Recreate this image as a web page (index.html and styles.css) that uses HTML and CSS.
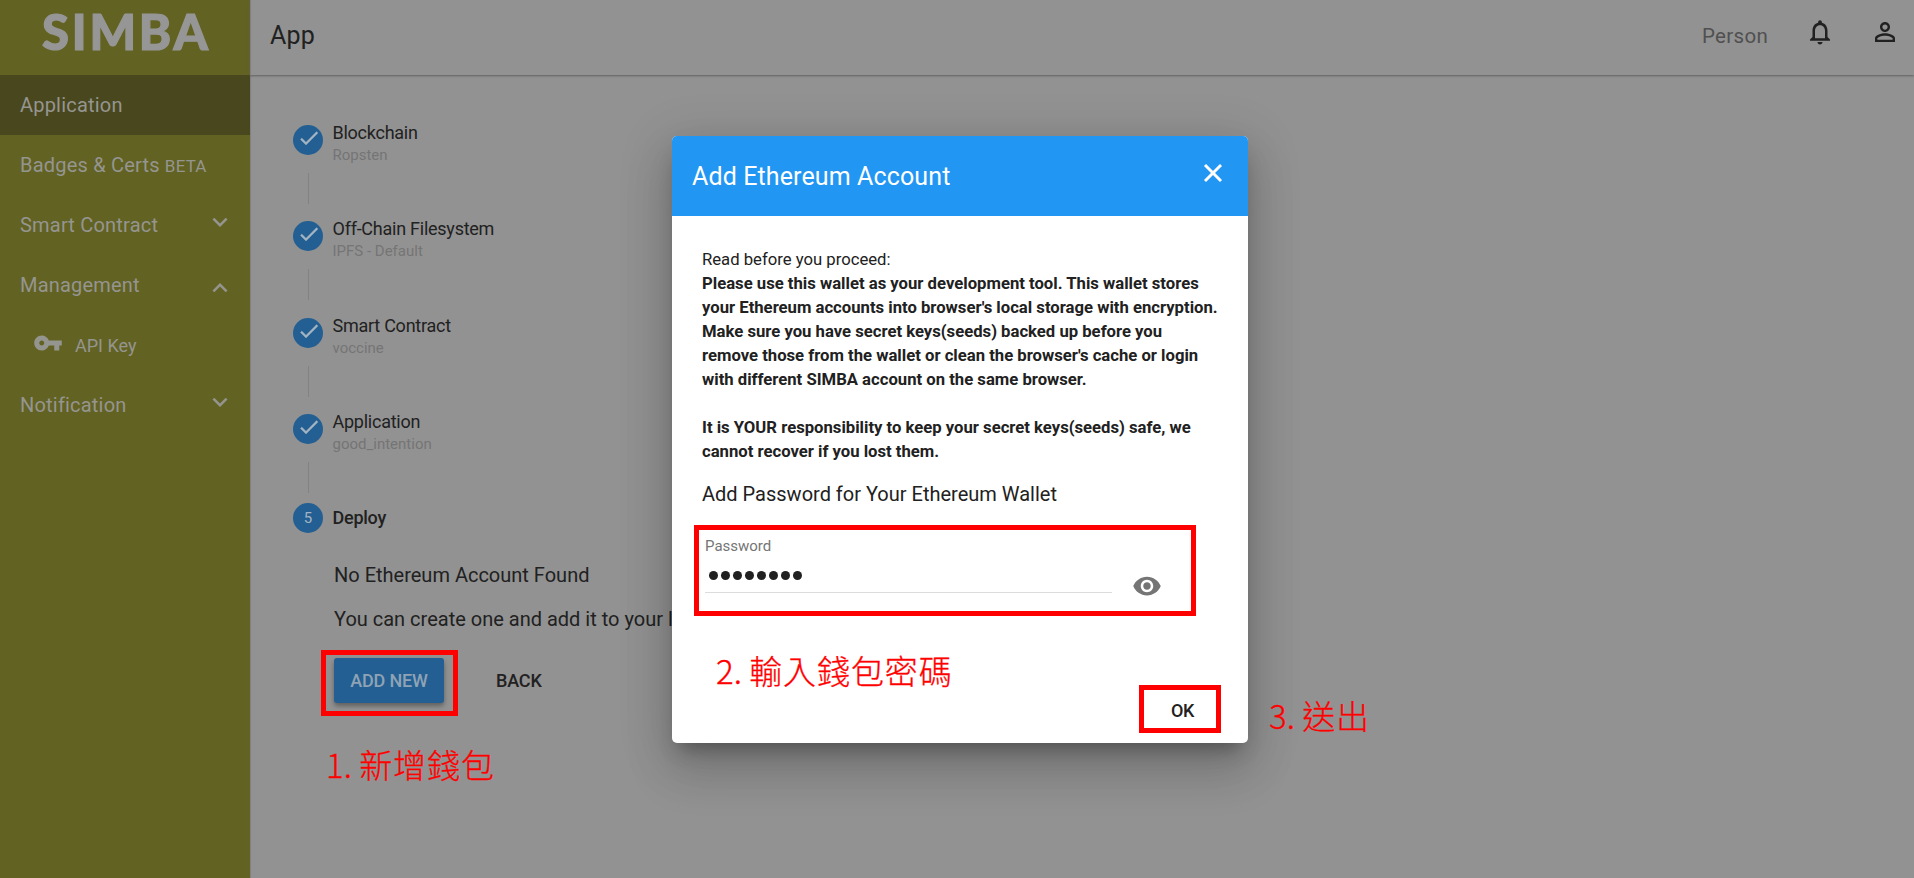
FILE: index.html
```html
<!DOCTYPE html>
<html lang="en">
<head>
<meta charset="utf-8">
<title>SIMBA</title>
<link rel="stylesheet" href="styles.css">
</head>
<body>
<div class="app">
  <aside class="sidebar">
    <div class="logo">SIMBA</div>
    <nav class="menu">
      <a class="item active"><span>Application</span></a>
      <a class="item"><span>Badges &amp; Certs <small class="beta">BETA</small></span></a>
      <a class="item"><span>Smart Contract</span><svg class="icon chevron" viewBox="0 0 24 24"><path d="M16.59 8.59L12 13.17 7.41 8.59 6 10l6 6 6-6z"/></svg></a>
      <a class="item"><span>Management</span><svg class="icon chevron up" viewBox="0 0 24 24"><path d="M12 8l-6 6 1.41 1.41L12 10.83l4.59 4.58L18 14z"/></svg></a>
      <a class="item sub"><svg class="icon" viewBox="0 0 24 24"><path d="M12.65 10C11.83 7.67 9.61 6 7 6c-3.31 0-6 2.69-6 6s2.690 6 6 6c2.610 0 4.830-1.670 5.650-4H17v4h4v-4h2v-4H12.650zM7 14c-1.100 0-2-.9-2-2s.9-2 2-2 2 .9 2 2-.9 2-2 2z"/></svg><span>API Key</span></a>
      <a class="item"><span>Notification</span><svg class="icon chevron" viewBox="0 0 24 24"><path d="M16.59 8.59L12 13.17 7.41 8.59 6 10l6 6 6-6z"/></svg></a>
    </nav>
  </aside>
  <div class="page">
    <header class="topbar">
      <h1 class="page-title">App</h1>
      <div class="user">
        <span class="user-name">Person</span>
        <svg class="icon bell" viewBox="0 0 24 24"><path d="M12 22c1.100 0 2-.9 2-2h-4c0 1.100.9 2 2 2zm6-6v-5c0-3.070-1.630-5.640-4.500-6.320V4c0-.83-.67-1.500-1.500-1.500s-1.500.67-1.500 1.500v.68C7.640 5.360 6 7.920 6 11v5l-2 2v1h16v-1l-2-2zm-2 1H8v-6c0-2.480 1.510-4.500 4-4.500s4 2.020 4 4.500v6z"/></svg>
        <svg class="icon" viewBox="0 0 24 24"><path d="M12 5.900c1.160 0 2.100.94 2.100 2.100s-.94 2.100-2.100 2.100S9.900 9.160 9.900 8s.94-2.100 2.100-2.100m0 9c2.970 0 6.100 1.460 6.100 2.100v1.100H5.900V17c0-.64 3.130-2.100 6.100-2.100M12 4C9.790 4 8 5.790 8 8s1.790 4 4 4 4-1.790 4-4-1.790-4-4-4zm0 9c-2.670 0-8 1.340-8 4v3h16v-3c0-2.660-5.330-4-8-4z"/></svg>
      </div>
    </header>
    <main class="content">
      <ol class="steps">
        <li class="step"><span class="dot"><svg viewBox="0 0 24 24"><path d="M9 16.170L4.830 12l-1.420 1.410L9 19 21 7l-1.410-1.410z"/></svg></span><div class="step-text"><span class="step-name">Blockchain</span><span class="step-value">Ropsten</span></div></li>
        <li class="step"><span class="dot"><svg viewBox="0 0 24 24"><path d="M9 16.170L4.830 12l-1.420 1.410L9 19 21 7l-1.410-1.410z"/></svg></span><div class="step-text"><span class="step-name">Off-Chain Filesystem</span><span class="step-value">IPFS - Default</span></div></li>
        <li class="step"><span class="dot"><svg viewBox="0 0 24 24"><path d="M9 16.170L4.830 12l-1.420 1.410L9 19 21 7l-1.410-1.410z"/></svg></span><div class="step-text"><span class="step-name">Smart Contract</span><span class="step-value">voccine</span></div></li>
        <li class="step"><span class="dot"><svg viewBox="0 0 24 24"><path d="M9 16.170L4.830 12l-1.420 1.410L9 19 21 7l-1.410-1.410z"/></svg></span><div class="step-text"><span class="step-name">Application</span><span class="step-value">good_intention</span></div></li>
      </ol>
      <div class="current"><span class="dot">5</span><span class="step-name strong">Deploy</span></div>
      <section class="deploy">
        <p class="line">No Ethereum Account Found</p>
        <p class="line">You can create one and add it to your library</p>
        <div class="actions"><button class="btn primary">ADD NEW</button><button class="btn">BACK</button></div>
      </section>
    </main>
  </div>
</div>

<div class="dialog">
  <header class="dialog-head">
    <h2 class="dialog-title">Add Ethereum Account</h2>
    <svg class="icon close" viewBox="0 0 24 24"><path d="M19 6.410L17.590 5 12 10.590 6.410 5 5 6.410 10.590 12 5 17.590 6.410 19 12 13.410 17.590 19 19 17.590 13.410 12z"/></svg>
  </header>
  <div class="dialog-body">
    <p class="note">Read before you proceed:<br><b>Please use this wallet as your development tool. This wallet stores<br>your Ethereum accounts into browser's local storage with encryption.<br>Make sure you have secret keys(seeds) backed up before you<br>remove those from the wallet or clean the browser's cache or login<br>with different SIMBA account on the same browser.<br><br>It is YOUR responsibility to keep your secret keys(seeds) safe, we<br>cannot recover if you lost them.</b></p>
    <h3 class="subhead">Add Password for Your Ethereum Wallet</h3>
    <div class="field-row">
      <div class="field">
        <span class="label">Password</span>
        <div class="mask"><i></i><i></i><i></i><i></i><i></i><i></i><i></i><i></i></div>
      </div>
      <svg class="icon eye" viewBox="0 0 24 24"><path d="M12 4.500C7 4.500 2.730 7.610 1 12c1.730 4.390 6 7.500 11 7.500s9.270-3.110 11-7.500c-1.730-4.390-6-7.500-11-7.500zM12 17c-2.760 0-5-2.240-5-5s2.240-5 5-5 5 2.240 5 5-2.240 5-5 5zm0-8c-1.660 0-3 1.340-3 3s1.340 3 3 3 3-1.340 3-3-1.340-3-3-3z"/></svg>
    </div>
    <div class="dialog-actions"><button class="btn ok">OK</button></div>
  </div>
</div>

<div class="mark mark-add"></div>
<div class="mark mark-password"></div>
<div class="mark mark-ok"></div>
<div class="caption caption-add">1. <span>新增錢包</span></div>
<div class="caption caption-password">2. <span>輸入錢包密碼</span></div>
<div class="caption caption-ok">3. <span>送出</span></div>
</body>
</html>
```
FILE: styles.css
```css
* { box-sizing: border-box; }
body {
  margin: 0;
  width: 1914px;
  height: 878px;
  overflow: hidden;
  position: relative;
  background: #929292;
  color: #212121;
  font-family: Roboto, "Liberation Sans", sans-serif;
}
h1, h2, h3, p, ol { margin: 0; padding: 0; font-weight: 400; }
.icon { width: 30px; height: 30px; fill: currentColor; flex: none; }

.app { display: flex; height: 878px; }
.sidebar { width: 250px; flex: none; background: #626223; color: #959590; }
.logo {
  height: 75px;
  padding-left: 42px;
  font: 900 49px/63px Lato, sans-serif;
  letter-spacing: 2.8px;
  -webkit-text-stroke: 1.2px #969696;
  color: #969696;
}
.menu { display: flex; flex-direction: column; }
.item {
  height: 60px;
  padding: 0 15px 0 20px;
  display: flex;
  align-items: center;
  justify-content: space-between;
  font-size: 20px;
  letter-spacing: .2px;
  white-space: nowrap;
}
.item.active { background: #49471e; }
.beta { font-size: 17px; }
.chevron { margin-bottom: 6px; }
.chevron.up { margin-bottom: -5px; }
.sub { justify-content: flex-start; gap: 12px; padding-left: 33px; font-size: 18px; letter-spacing: 0; }
.sub .icon { margin-bottom: 4px; }

.page { flex: 1; min-width: 0; box-shadow: inset 2px 0 1px -1px #808080; }
.topbar {
  height: 75px;
  padding: 0 14px 0 20px;
  display: flex;
  justify-content: space-between;
  box-shadow: 0 1px 2px #606060;
}
.page-title { font-size: 25px; line-height: 72px; letter-spacing: .2px; }
.user { display: flex; padding-top: 17px; }
.user-name { font-size: 20.500px; line-height: 38px; letter-spacing: .3px; color: #505050; margin-right: 37px; }
.bell { margin-right: 35px; }

.content { padding: 46px 0 0 43px; }
.steps { list-style: none; }
.step {
  height: 96.330px;
  display: flex;
  gap: 9.500px;
  padding-top: 4px;
  background: linear-gradient(#828282, #828282) 15px 52px / 1px 31px no-repeat;
}
.dot {
  width: 30px;
  height: 30px;
  border-radius: 50%;
  background: #235f92;
  color: #a3b4c2;
  display: flex;
  align-items: center;
  justify-content: center;
  font-size: 15px;
  flex: none;
}
.dot svg { width: 24px; height: 24px; fill: currentColor; margin: -4px 0 0 1px; stroke: currentColor; stroke-width: .3; }
.step-text { display: flex; flex-direction: column; margin-top: -4px; }
.step-name { font-size: 18px; line-height: 24px; letter-spacing: -.25px; }
.step-value { font-size: 15px; line-height: 20px; color: #757575; }
.strong { font-weight: 500; }
.current { display: flex; align-items: center; gap: 9.500px; height: 30px; margin-top: -3px; }
.deploy { padding: 20px 0 0 41px; width: 460px; white-space: nowrap; }
.line { font-size: 20px; line-height: 44px; }
.actions { display: flex; gap: 32px; padding-top: 17px; }
.btn {
  height: 45px;
  padding: 0 20px;
  border: 0;
  border-radius: 3px;
  background: none;
  color: #212121;
  font: 500 18px/45px Roboto, sans-serif;
  letter-spacing: -.15px;
}
.btn.primary { width: 110px; padding: 0; background: #235f92; color: #8ea3b5; box-shadow: 0 3px 5px rgba(0, 0, 0, .35); }

.dialog {
  position: absolute;
  left: 672px;
  top: 136px;
  width: 576px;
  height: 607px;
  border-radius: 5px;
  overflow: hidden;
  background: #fff;
  box-shadow: 0 13px 18px -8px rgba(0, 0, 0, .3), 0 28px 46px 4px rgba(0, 0, 0, .13), 0 10px 50px 8px rgba(0, 0, 0, .12);
}
.dialog-head {
  height: 80px;
  padding: 0 20px;
  display: flex;
  justify-content: space-between;
  background: #2196f3;
  color: #fff;
}
.dialog-title { font-size: 25px; line-height: 82px; letter-spacing: .12px; }
.close { margin-top: 22px; stroke: currentColor; stroke-width: .4; }
.dialog-body { padding: 32px 30px 0; }
.note { font-size: 16.680px; line-height: 24px; white-space: nowrap; }
.subhead { font-size: 20px; line-height: 30px; margin-top: 15px; }
.field-row { display: flex; padding: 25px 0 0 3px; gap: 20px; }
.field { width: 407px; height: 59px; border-bottom: 1px solid #dcdcdc; }
.label { display: block; font-size: 15px; line-height: 24px; color: #757575; }
.mask { display: flex; gap: 3px; padding: 13px 0 0 4px; }
.mask i { width: 9px; height: 9px; border-radius: 50%; background: #212121; }
.eye { color: #757575; margin-top: 37px; }
.dialog-actions { display: flex; justify-content: flex-end; padding-top: 87px; }
.ok { width: 80px; padding: 0 0 0 9px; letter-spacing: -.5px; }

.mark { position: absolute; border: 5px solid #f00; }
.mark-add { left: 321px; top: 650px; width: 137px; height: 66px; }
.mark-password { left: 694px; top: 525px; width: 502px; height: 91px; }
.mark-ok { left: 1139px; top: 685px; width: 82px; height: 48px; }
.caption {
  position: absolute;
  color: #f00;
  font: 300 33px/40px "Noto Sans CJK TC", sans-serif;
  -webkit-text-stroke: .3px #f00;
  white-space: nowrap;
}
.caption span { letter-spacing: .9px; }
.caption-add { left: 326px; top: 744px; }
.caption-password { left: 716px; top: 650px; }
.caption-ok { left: 1269px; top: 695px; }
```
